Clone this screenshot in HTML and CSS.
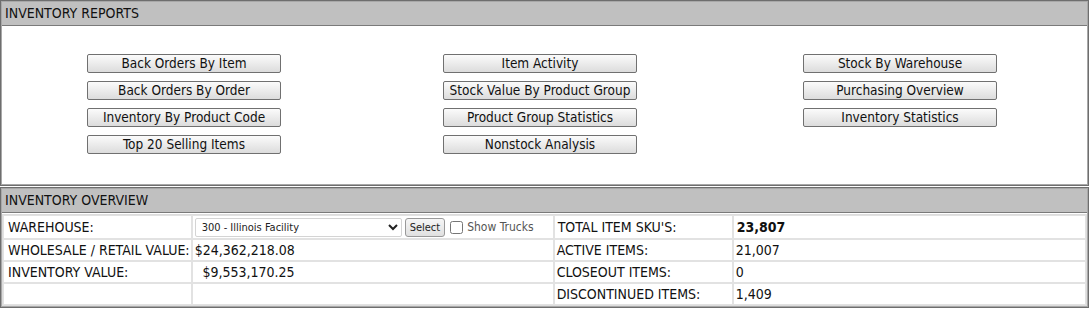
FILE: index.html
```html
<!DOCTYPE html>
<html lang="en">
<head>
  <meta charset="UTF-8">
  <title>Inventory</title>
  <link rel="stylesheet" href="styles.css">
</head>
<body>
  <div class="panel">
    <div class="panel-head">INVENTORY REPORTS</div>
    <div class="reports">
      <div class="col">
        <button class="rpt">Back Orders By Item</button>
        <button class="rpt">Back Orders By Order</button>
        <button class="rpt">Inventory By Product Code</button>
        <button class="rpt">Top 20 Selling Items</button>
      </div>
      <div class="col">
        <button class="rpt">Item Activity</button>
        <button class="rpt">Stock Value By Product Group</button>
        <button class="rpt">Product Group Statistics</button>
        <button class="rpt">Nonstock Analysis</button>
      </div>
      <div class="col">
        <button class="rpt">Stock By Warehouse</button>
        <button class="rpt">Purchasing Overview</button>
        <button class="rpt">Inventory Statistics</button>
      </div>
    </div>
  </div>

  <div class="panel panel-2">
    <div class="panel-head">INVENTORY OVERVIEW</div>
    <table class="overview">
      <tr>
        <td class="c1">WAREHOUSE:</td>
        <td class="c2">
          <div class="wh">
            <select class="wh-select">
              <option>300 - Illinois Facility</option>
            </select>
            <button class="sel-btn">Select</button>
            <label class="trucks"><input type="checkbox"> Show Trucks</label>
          </div>
        </td>
        <td class="c3">TOTAL ITEM SKU'S:</td>
        <td class="c4"><b>23,807</b></td>
      </tr>
      <tr>
        <td>WHOLESALE / RETAIL VALUE:</td>
        <td><span class="money">$24,362,218.08</span></td>
        <td>ACTIVE ITEMS:</td>
        <td>21,007</td>
      </tr>
      <tr>
        <td>INVENTORY VALUE:</td>
        <td><span class="money">$9,553,170.25</span></td>
        <td>CLOSEOUT ITEMS:</td>
        <td>0</td>
      </tr>
      <tr>
        <td></td>
        <td></td>
        <td>DISCONTINUED ITEMS:</td>
        <td>1,409</td>
      </tr>
    </table>
  </div>
</body>
</html>
```

FILE: styles.css
```css
body {
  margin: 0;
  font-family: "DejaVu Sans Condensed", "DejaVu Sans", sans-serif;
  font-size: 14px;
  color: #111;
  background: #fff;
  width: 1089px;
}
.panel {
  border: 1px solid #6e6e6e;
  box-shadow: inset 0 0 0 1px #a8a8a8;
  padding: 1px;
  background: #fff;
}
.panel-2 {
  margin-top: 1px;
}
.panel-head {
  background: #c0c0c0;
  border-bottom: 1px solid #7a7a7a;
  height: 23px;
  line-height: 23px;
  padding-left: 3px;
}
.reports {
  display: grid;
  grid-template-columns: 356px 360px 194px;
  padding: 28px 0 27px 85px;
  height: 103px;
}
.col {
  display: flex;
  flex-direction: column;
  align-items: flex-start;
  gap: 8px;
}
.rpt {
  width: 194px;
  height: 19px;
  padding: 0;
  font-family: inherit;
  font-size: 13.5px;
  line-height: 17px;
  color: #111;
  border: 1px solid #707070;
  border-radius: 2px;
  background: linear-gradient(to bottom, #fbfbfb, #dcdcdc);
}
.overview {
  width: 100%;
  border-collapse: separate;
  border-spacing: 0;
  border: 1px solid #dcdcdc;
  margin-top: 1px;
}
.overview td {
  border: 1px solid #e2e2e2;
  height: 20px;
  padding: 0 2px;
  white-space: nowrap;
}
.overview td:first-child { padding-left: 4px; padding-right: 1px; }
.overview .c1 { width: 181px; }
.overview .c2 { width: 356px; }
.overview .c3 { width: 172px; padding-left: 3px; }
.overview .c4 { padding-left: 3px; }
.overview tr:first-child td { height: 22px; }
.wh {
  display: flex;
  align-items: center;
}
.wh-select {
  width: 207px;
  height: 19px;
  font-family: "DejaVu Sans Condensed", sans-serif;
  font-size: 11px;
  color: #222;
  border: 1px solid #d4d4d4;
  border-radius: 2px;
  background: #fff;
  padding: 0 2px;
}
.sel-btn {
  margin-left: 3px;
  height: 19px;
  padding: 0 4px;
  font-family: inherit;
  font-size: 11px;
  color: #222;
  border: 1px solid #999;
  border-radius: 3px;
  background: linear-gradient(to bottom, #f6f6f6, #e0e0e0);
}
.trucks {
  display: flex;
  align-items: center;
  margin-left: 5px;
  color: #555;
  font-size: 12px;
}
.trucks input {
  margin: 0 4px 0 0;
  width: 13px;
  height: 13px;
}
.money {
  display: inline-block;
  width: 100px;
  text-align: right;
}
```
